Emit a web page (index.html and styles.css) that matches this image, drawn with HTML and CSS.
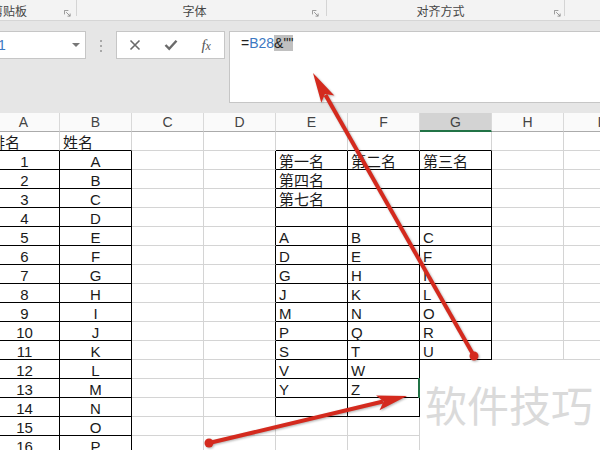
FILE: index.html
```html
<!DOCTYPE html>
<html lang="zh">
<head>
<meta charset="utf-8">
<title>Excel</title>
<link rel="stylesheet" href="styles.css">
</head>
<body>
<div class="ribbon">
  <div class="grp g1"><span class="glabel">剪贴板</span><svg class="launch" viewBox="0 0 8 8"><path d="M0.5 5V0.5H5M2.5 2.5L7 7M7 4V7H4" fill="none" stroke="#8a8a8a" stroke-width="1"/></svg></div>
  <div class="grp g2"><span class="glabel">字体</span><svg class="launch" viewBox="0 0 8 8"><path d="M0.5 5V0.5H5M2.5 2.5L7 7M7 4V7H4" fill="none" stroke="#8a8a8a" stroke-width="1"/></svg></div>
  <div class="grp g3"><span class="glabel">对齐方式</span><svg class="launch" viewBox="0 0 8 8"><path d="M0.5 5V0.5H5M2.5 2.5L7 7M7 4V7H4" fill="none" stroke="#8a8a8a" stroke-width="1"/></svg></div>
</div>

<div class="fbar">
  <div class="namebox"><span class="nbtext">G1</span><span class="caret"></span></div>
  <div class="grip"><i></i><i></i><i></i></div>
  <div class="fbtns">
    <span class="fb"><svg width="12" height="12" viewBox="0 0 12 12"><path d="M1.5 1.5L10.5 10.5M10.5 1.5L1.5 10.5" stroke="#6a6a6a" stroke-width="1.6" fill="none"/></svg></span>
    <span class="fb"><svg width="14" height="12" viewBox="0 0 14 12"><path d="M1.5 6L5.2 9.8L12.5 1.8" stroke="#6a6a6a" stroke-width="2.4" fill="none"/></svg></span>
    <span class="fb fx"><i>f</i><i class="fxx">x</i></span>
  </div>
  <div class="finput">=<span class="ref">B28</span><span class="sel">&amp;""</span></div>
</div>

<div class="sheet">
  <div class="h">A</div><div class="h">B</div><div class="h">C</div><div class="h">D</div><div class="h">E</div><div class="h">F</div><div class="h hsel">G</div><div class="h">H</div><div class="h">I</div>

  <div class="c kb">排名</div><div class="c kb">姓名</div><div class="c"></div><div class="c"></div><div class="c kb"></div><div class="c kb"></div><div class="c kb"></div><div class="c"></div><div class="c"></div>

  <div class="c m kr kb">1</div><div class="c m kr kb">A</div><div class="c"></div><div class="c kr"></div><div class="c kr kb">第一名</div><div class="c kr kb">第二名</div><div class="c kr kb">第三名</div><div class="c"></div><div class="c"></div>
  <div class="c m kr kb">2</div><div class="c m kr kb">B</div><div class="c"></div><div class="c kr"></div><div class="c kr kb">第四名</div><div class="c kr kb"></div><div class="c kr kb"></div><div class="c"></div><div class="c"></div>
  <div class="c m kr kb">3</div><div class="c m kr kb">C</div><div class="c"></div><div class="c kr"></div><div class="c kr kb">第七名</div><div class="c kr kb"></div><div class="c kr kb"></div><div class="c"></div><div class="c"></div>
  <div class="c m kr kb">4</div><div class="c m kr kb">D</div><div class="c"></div><div class="c kr"></div><div class="c kr kb"></div><div class="c kr kb"></div><div class="c kr kb"></div><div class="c"></div><div class="c"></div>
  <div class="c m kr kb">5</div><div class="c m kr kb">E</div><div class="c"></div><div class="c kr"></div><div class="c kr kb">A</div><div class="c kr kb">B</div><div class="c kr kb">C</div><div class="c"></div><div class="c"></div>
  <div class="c m kr kb">6</div><div class="c m kr kb">F</div><div class="c"></div><div class="c kr"></div><div class="c kr kb">D</div><div class="c kr kb">E</div><div class="c kr kb">F</div><div class="c"></div><div class="c"></div>
  <div class="c m kr kb">7</div><div class="c m kr kb">G</div><div class="c"></div><div class="c kr"></div><div class="c kr kb">G</div><div class="c kr kb">H</div><div class="c kr kb">I</div><div class="c"></div><div class="c"></div>
  <div class="c m kr kb">8</div><div class="c m kr kb">H</div><div class="c"></div><div class="c kr"></div><div class="c kr kb">J</div><div class="c kr kb">K</div><div class="c kr kb">L</div><div class="c"></div><div class="c"></div>
  <div class="c m kr kb">9</div><div class="c m kr kb">I</div><div class="c"></div><div class="c kr"></div><div class="c kr kb">M</div><div class="c kr kb">N</div><div class="c kr kb">O</div><div class="c"></div><div class="c"></div>
  <div class="c m kr kb">10</div><div class="c m kr kb">J</div><div class="c"></div><div class="c kr"></div><div class="c kr kb">P</div><div class="c kr kb">Q</div><div class="c kr kb">R</div><div class="c"></div><div class="c"></div>
  <div class="c m kr kb">11</div><div class="c m kr kb">K</div><div class="c"></div><div class="c kr"></div><div class="c kr kb">S</div><div class="c kr kb">T</div><div class="c kr kb">U</div><div class="c"></div><div class="c"></div>
  <div class="c m kr kb">12</div><div class="c m kr kb">L</div><div class="c"></div><div class="c kr"></div><div class="c kr kb">V</div><div class="c kr kb">W</div><div class="c"></div><div class="c"></div><div class="c"></div>
  <div class="c m kr kb">13</div><div class="c m kr kb">M</div><div class="c"></div><div class="c kr"></div><div class="c kr kb">Y</div><div class="c kr kb">Z</div><div class="c act"></div><div class="c"></div><div class="c"></div>
  <div class="c m kr kb">14</div><div class="c m kr kb">N</div><div class="c"></div><div class="c kr"></div><div class="c kr kb"></div><div class="c kr kb"></div><div class="c"></div><div class="c"></div><div class="c"></div>
  <div class="c m kr kb">15</div><div class="c m kr kb">O</div><div class="c"></div><div class="c"></div><div class="c"></div><div class="c"></div><div class="c"></div><div class="c"></div><div class="c"></div>
  <div class="c m kr kb">16</div><div class="c m kr kb">P</div><div class="c"></div><div class="c"></div><div class="c"></div><div class="c"></div><div class="c"></div><div class="c"></div><div class="c"></div>
</div>

<div class="wm">软件技巧</div>

<svg class="arrows" width="600" height="450" viewBox="0 0 600 450">
  <g fill="#d42a1e" stroke="none">
    <line x1="474" y1="356" x2="325.5" y2="95" stroke="#d42a1e" stroke-width="4"/>
    <polygon points="313,73 334.3,95.4 324.9,93.9 321.3,102.8"/>
    <circle cx="474" cy="356" r="4.5"/>
    <line x1="209" y1="443" x2="383" y2="401.5" stroke="#d42a1e" stroke-width="4"/>
    <polygon points="407,396 379.5,410.2 383.6,401.5 376.1,395.6"/>
    <circle cx="209" cy="443" r="4.5"/>
  </g>
</svg>
</body>
</html>
```

FILE: styles.css
```css
html, body {
  margin: 0;
  padding: 0;
}
body {
  width: 600px;
  height: 450px;
  overflow: hidden;
  position: relative;
  background: #ffffff;
  font-family: "Liberation Sans", "Noto Sans CJK SC", sans-serif;
}

/* ribbon group labels */
.ribbon {
  display: flex;
  align-items: flex-start;
  height: 20px;
  background: #f3f3f3;
  border-bottom: 1px solid #d6d6d6;
}
.grp {
  display: flex;
  flex: none;
  height: 16px;
  box-sizing: border-box;
  border-right: 1px solid #d4d4d4;
}
.glabel {
  flex: 1;
  text-align: center;
  line-height: 22px;
  font-size: 12px;
  color: #454545;
  font-family: "Noto Sans CJK SC", sans-serif;
  white-space: nowrap;
}
.launch {
  flex: none;
  width: 7px;
  height: 7px;
  margin-top: 10px;
}
.g1 { margin-left: -9px; width: 86px; }
.g1 .glabel { text-align: left; }
.g1 .launch { margin-right: 5px; }
.g2 { width: 250px; }
.g2 .launch { margin-right: 7px; }
.g3 { width: 238px; }
.g3 .launch { margin-right: 3px; }

/* formula bar */
.fbar {
  display: flex;
  align-items: flex-start;
  height: 92px;
  box-sizing: border-box;
  padding-top: 10px;
  background: #e6e6e6;
}
.namebox {
  flex: none;
  display: flex;
  align-items: center;
  margin-left: -30px;
  width: 116px;
  height: 28px;
  box-sizing: border-box;
  border: 1px solid #c6c6c6;
  background: #ffffff;
}
.nbtext {
  padding-left: 16px;
  font-size: 14px;
  color: #3c78c2;
}
.caret {
  margin-left: auto;
  margin-right: 5px;
  width: 0;
  height: 0;
  border-left: 4px solid transparent;
  border-right: 4px solid transparent;
  border-top: 4px solid #777777;
}
.grip {
  flex: none;
  width: 30px;
  display: flex;
  flex-direction: column;
  align-items: center;
  gap: 3px;
  padding-top: 9px;
}
.grip i {
  display: block;
  width: 2px;
  height: 2px;
  background: #a8a8a8;
}
.fbtns {
  flex: none;
  display: flex;
  width: 109px;
  height: 28px;
  box-sizing: border-box;
  border: 1px solid #c6c6c6;
  background: #ffffff;
}
.fb {
  flex: 1;
  display: flex;
  align-items: center;
  justify-content: center;
}
.fx {
  font-family: "Liberation Serif", serif;
  font-size: 15px;
  color: #555555;
}
.fx i { font-style: italic; }
.fxx { font-size: 12px; margin-top: 3px; }
.finput {
  flex: 1;
  margin-left: 4px;
  height: 72px;
  box-sizing: border-box;
  border: 1px solid #c6c6c6;
  border-right: none;
  background: #ffffff;
  padding-left: 11px;
  font-size: 14px;
  line-height: 23px;
  color: #222222;
  white-space: pre;
}
.ref { color: #3c78c2; }
.sel { background: #c0c0c0; }

/* sheet grid */
.sheet {
  display: grid;
  grid-template-columns: repeat(9, 72px);
  grid-auto-rows: 19px;
  margin-left: -12px;
}
.h {
  box-sizing: border-box;
  background: #fafafa;
  border-right: 1px solid #d9d9d9;
  border-bottom: 1px solid #ababab;
  text-align: center;
  font-size: 14px;
  line-height: 19px;
  color: #444444;
}
.hsel {
  background: #d3d3d3;
  border-bottom: 2px solid #217346;
  line-height: 18px;
}
.c {
  box-sizing: border-box;
  border-right: 1px solid #d4d4d4;
  border-bottom: 1px solid #d4d4d4;
  padding: 2px 2px 0 3px;
  font-size: 15px;
  line-height: 17px;
  color: #1a1a1a;
  white-space: nowrap;
}
.c:first-child, .sheet > .c:nth-child(9n+1) { padding-left: 2px; }
.m { text-align: center; padding-left: 0; padding-right: 0; }
.kr { border-right-color: #000000; }
.kb { border-bottom-color: #000000; }
.act { position: relative; }
.act::before {
  content: "";
  position: absolute;
  left: -2px;
  top: -1px;
  width: 2px;
  height: 20px;
  background: #217346;
}

/* watermark and annotation overlays */
.wm {
  position: absolute;
  left: 420px;
  top: 360px;
  width: 180px;
  height: 90px;
  background: #ffffff;
  box-sizing: border-box;
  padding-left: 5px;
  font-family: "Noto Sans CJK SC", sans-serif;
  font-size: 42px;
  line-height: 88px;
  color: #dadada;
  white-space: nowrap;
}
.arrows {
  position: absolute;
  left: 0;
  top: 0;
  pointer-events: none;
  filter: drop-shadow(1px 1px 1px rgba(0, 0, 0, 0.3));
}
```
